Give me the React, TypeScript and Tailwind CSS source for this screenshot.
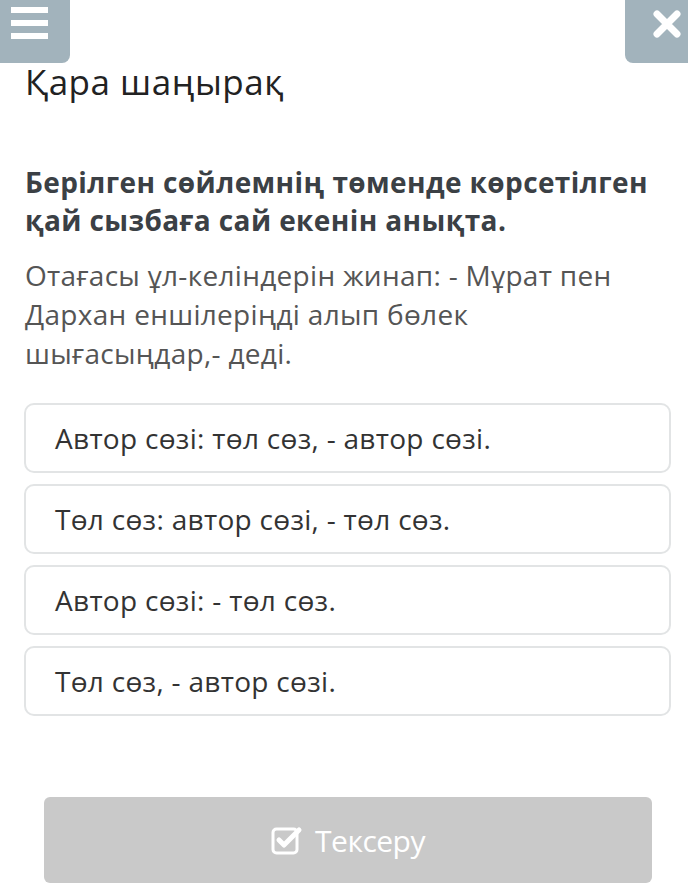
const options = [
  "Автор сөзі: төл сөз, - автор сөзі.",
  "Төл сөз: автор сөзі, - төл сөз.",
  "Автор сөзі: - төл сөз.",
  "Төл сөз, - автор сөзі.",
]

export default function App() {
  return (
    <div className="min-h-[896px] w-[688px] bg-white font-['Open_Sans',sans-serif]">
      <div className="flex h-[63px] justify-between">
        <button className="flex h-[63px] w-[70px] flex-col gap-[7px] rounded-br-[8px] bg-[#a2b3bc] pl-[11px] pt-[7px]">
          <span className="h-[6px] w-[37px] bg-white" />
          <span className="h-[6px] w-[37px] bg-white" />
          <span className="h-[6px] w-[37px] bg-white" />
        </button>
        <button className="flex h-[63px] w-[63px] items-start justify-end rounded-bl-[8px] bg-[#a2b3bc] pr-[6px] pt-[10px]">
          <svg width="30" height="28" viewBox="0 0 30 28">
            <path d="M5 4 L25 24 M25 4 L5 24" stroke="white" strokeWidth="7" strokeLinecap="round" />
          </svg>
        </button>
      </div>

      <h1 className="-mt-[2px] pl-[25px] text-[35px] leading-[42px] font-normal tracking-[0.5px] text-[#222]">Қара шаңырақ</h1>

      <div className="mt-[60px] pl-[25px]">
        <p className="pr-[25px] text-[28px] leading-[38px] font-bold tracking-[0.4px] text-[#3b4045]">
          Берілген сөйлемнің төменде көрсетілген қай сызбаға сай екенін анықта.
        </p>
        <p className="mt-[17px] pr-[45px] text-[28px] leading-[39px] tracking-[0.3px] text-[#555]">
          Отағасы ұл-келіндерін жинап: - Мұрат пен Дархан еншілеріңді алып бөлек шығасыңдар,- деді.
        </p>
      </div>

      <div className="mt-[30px] flex flex-col gap-[11px] px-[24px] pr-[17px]">
        {options.map((o) => (
          <div
            key={o}
            className="flex h-[70px] items-center rounded-[10px] border-2 border-[#e2e4e5] pl-[29px] text-[28px] tracking-[0.3px] text-[#333]"
          >
            {o}
          </div>
        ))}
      </div>

      <div className="mt-[81px] px-[44px] pr-[36px]">
        <button className="flex h-[86px] w-full items-center justify-center gap-[12px] rounded-[6px] bg-[#c9c9c9] text-[30px] tracking-[-0.5px] text-white">
          <svg width="32" height="30" viewBox="0 0 32 30" fill="none">
            <rect x="2" y="4" width="24" height="24" rx="3.5" stroke="white" strokeWidth="3" />
            <path d="M8 15 L13 20 L28 5" stroke="white" strokeWidth="5" strokeLinecap="round" strokeLinejoin="round" />
          </svg>
          Тексеру
        </button>
      </div>
    </div>
  )
}
